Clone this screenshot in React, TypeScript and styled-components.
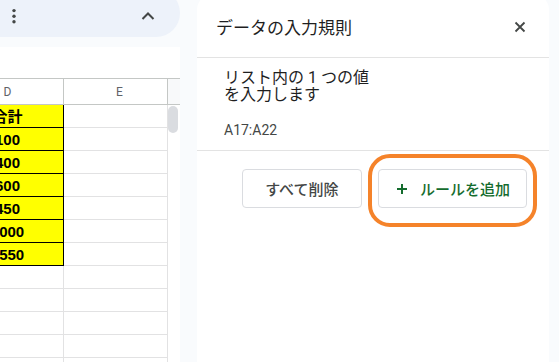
import React from 'react';
import styled, { createGlobalStyle } from 'styled-components';

const GlobalStyle = createGlobalStyle`
  html, body { margin: 0; padding: 0; background: #f9fbfd; }
  body { font-family: Roboto, "Noto Sans CJK JP", sans-serif; overflow: hidden; }
  *, *::before, *::after { box-sizing: border-box; }
`;

const Page = styled.div`
  display: flex;
  gap: 17px;
  width: 559px;
  height: 362px;
  overflow: hidden;
  padding-right: 10px;
`;

const LeftColumn = styled.div`
  width: 180px;
  flex: none;
  display: flex;
  flex-direction: column;
  gap: 10px;
`;

const Toolbar = styled.div`
  flex: none;
  height: 48px;
  margin-top: -11px;
  padding: 6px 25px 0 8px;
  background: #edf2fa;
  border-radius: 0 24px 24px 0;
  display: flex;
  align-items: center;
  justify-content: space-between;
`;

const IconButton = styled.div<{ $w: number; $h: number }>`
  width: ${(p) => p.$w}px;
  height: ${(p) => p.$h}px;
  display: flex;
  align-items: center;
  justify-content: center;
  color: #444746;
`;

const Sheet = styled.div`
  flex: 1;
  background: #fff;
  overflow: hidden;
  display: flex;
  flex-direction: column;
`;

const FormulaStrip = styled.div`
  height: 31px;
  flex: none;
`;

const Grid = styled.div`
  display: grid;
  grid-template-columns: 112px 104px 12px;
  grid-template-rows: 26px;
  grid-auto-rows: 23px;
  margin-left: -48px;
  width: 228px;
  border-top: 1px solid #c4c7c5;
`;

const HeaderCell = styled.div<{ $shift?: number }>`
  display: flex;
  align-items: center;
  justify-content: center;
  padding-left: ${(p) => p.$shift ?? 0}px;
  border-bottom: 1px solid #c4c7c5;
  border-right: 1px solid #c4c7c5;
  font-size: 12px;
  color: #5f6368;
  font-family: Roboto, sans-serif;
`;

const ScrollHeader = styled.div`
  background: #f8f9fa;
  border-bottom: 1px solid #c4c7c5;
`;

const ScrollTrack = styled.div`
  grid-column: 3;
  grid-row: 2 / span 12;
  padding-top: 1px;
`;

const Thumb = styled.div`
  width: 10px;
  height: 27px;
  border-radius: 5px;
  background: #dadce0;
`;

const ValueCell = styled.div<{ $filled?: boolean }>`
  grid-column: 1;
  display: flex;
  justify-content: center;
  align-items: flex-end;
  padding-bottom: 3px;
  line-height: 1;
  font-family: "Liberation Sans", "Noto Sans CJK JP", sans-serif;
  font-weight: 700;
  font-size: 15px;
  color: #000;
  background: ${(p) => (p.$filled ? '#ffff00' : '#fff')};
  border-bottom: 1px solid ${(p) => (p.$filled ? '#000' : '#e2e2e3')};
  border-right: 1px solid ${(p) => (p.$filled ? '#000' : '#e2e2e3')};
`;

const EmptyCell = styled.div`
  grid-column: 2;
  border-bottom: 1px solid #e2e2e3;
  border-right: 1px solid #e2e2e3;
`;

const Panel = styled.div`
  position: relative;
  width: 352px;
  flex: none;
  margin-top: -6px;
  background: #fff;
  border-radius: 16px 16px 0 0;
  display: flex;
  flex-direction: column;
`;

const PanelHeader = styled.div`
  height: 64px;
  padding: 2px 17px 0 19px;
  border-bottom: 1px solid #e3e3e3;
  display: flex;
  align-items: center;
  justify-content: space-between;
`;

const Title = styled.div`
  font-size: 17px;
  color: #1f1f1f;
  font-family: "Noto Sans CJK JP", sans-serif;
`;

const RuleItem = styled.div`
  height: 93px;
  padding: 12px 0 0 27px;
  border-bottom: 1px solid #e3e3e3;
`;

const RuleText = styled.div`
  font-size: 16px;
  line-height: 16.5px;
  font-weight: 400;
  color: #1f1f1f;
  font-family: Roboto, "Noto Sans CJK JP", sans-serif;
`;

const RuleRange = styled.div`
  margin-top: 17px;
  font-size: 14px;
  line-height: 20px;
  color: #444746;
`;

const ButtonRow = styled.div`
  display: flex;
  justify-content: flex-end;
  gap: 16px;
  padding: 18px 22px 0 0;
`;

const Button = styled.button<{ $primary?: boolean }>`
  height: 39px;
  display: flex;
  align-items: center;
  gap: 12px;
  padding: ${(p) => (p.$primary ? '0 16px 0 17px' : '0 22.5px')};
  background: #fff;
  border: 1px solid #dadce0;
  border-radius: 4px;
  font-family: "Noto Sans CJK JP", sans-serif;
  font-size: 15px;
  font-weight: 500;
  color: ${(p) => (p.$primary ? '#146c2e' : '#444746')};
`;

const Highlight = styled.div`
  position: absolute;
  top: 160px;
  left: 171px;
  width: 169px;
  height: 73px;
  border: 4px solid #f5832a;
  border-radius: 22px;
  pointer-events: none;
`;

const values = ['合計', '100', '400', '600', '450', '1000', '1550'];

export default function App() {
  return (
    <>
      <GlobalStyle />
      <Page>
        <LeftColumn>
          <Toolbar>
            <IconButton $w={12} $h={20}>
              <svg width="12" height="20" viewBox="0 0 12 20">
                <circle cx="6" cy="4.6" r="1.7" fill="currentColor" />
                <circle cx="6" cy="10.2" r="1.7" fill="currentColor" />
                <circle cx="6" cy="15.8" r="1.7" fill="currentColor" />
              </svg>
            </IconButton>
            <IconButton $w={14} $h={10}>
              <svg width="14" height="10" viewBox="0 0 14 10">
                <polyline points="1.5,8 7,2.5 12.5,8" fill="none" stroke="currentColor" strokeWidth="2" />
              </svg>
            </IconButton>
          </Toolbar>
          <Sheet>
            <FormulaStrip />
            <Grid>
              <HeaderCell>D</HeaderCell>
              <HeaderCell $shift={8}>E</HeaderCell>
              <ScrollHeader />
              <ScrollTrack>
                <Thumb />
              </ScrollTrack>
              {values.map((v) => (
                <React.Fragment key={v}>
                  <ValueCell $filled>{v}</ValueCell>
                  <EmptyCell />
                </React.Fragment>
              ))}
              {[0, 1, 2, 3, 4].map((i) => (
                <React.Fragment key={`e${i}`}>
                  <ValueCell />
                  <EmptyCell />
                </React.Fragment>
              ))}
            </Grid>
          </Sheet>
        </LeftColumn>
        <Panel>
          <PanelHeader>
            <Title>データの入力規則</Title>
            <IconButton $w={24} $h={24}>
              <svg width="12" height="12" viewBox="0 0 12 12">
                <path d="M1.5 1.5 L10.5 10.5 M10.5 1.5 L1.5 10.5" stroke="currentColor" strokeWidth="1.8" />
              </svg>
            </IconButton>
          </PanelHeader>
          <RuleItem>
            <RuleText>
              リスト内の 1 つの値
              <br />
              を入力します
            </RuleText>
            <RuleRange>A17:A22</RuleRange>
          </RuleItem>
          <ButtonRow>
            <Button>すべて削除</Button>
            <Button $primary>
              <svg width="12" height="12" viewBox="0 0 12 12">
                <path d="M6 1 V11 M1 6 H11" stroke="currentColor" strokeWidth="2" />
              </svg>
              ルールを追加
            </Button>
          </ButtonRow>
          <Highlight />
        </Panel>
      </Page>
    </>
  );
}
